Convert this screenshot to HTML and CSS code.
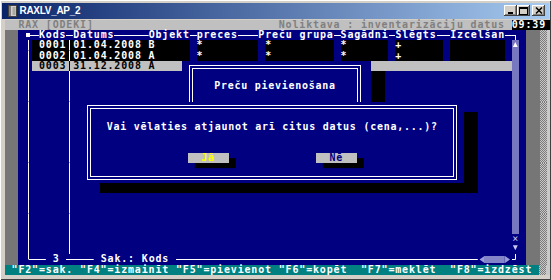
FILE: index.html
```html
<!DOCTYPE html>
<html lang="lv">
<head>
    <meta charset="UTF-8">
    <title>RAXLV_AP_2</title>
    <link rel="stylesheet" href="styles.css">
</head>
<body>

<div class="window">
    <div class="titlebar">
        <svg class="app-icon" viewBox="0 0 9 12"><rect x="0.5" y="0.5" width="8" height="11" fill="#d4d0c8" stroke="#404040"/><rect x="1" y="1" width="2" height="10" fill="#808080"/><path d="M4.5 3h3M4.5 5h3M4.5 7h3M4.5 9h3" stroke="#808080"/></svg>
        <span class="title">RAXLV_AP_2</span>
        <div class="caption-buttons">
            <span class="cap-btn"><svg width="8" height="7" viewBox="0 0 8 7"><rect x="1" y="5" width="5" height="2" fill="#000"/></svg></span>
            <span class="cap-btn"><svg width="9" height="8" viewBox="0 0 9 8"><rect x="0.5" y="0.5" width="8" height="7" fill="none" stroke="#000"/><rect x="0" y="0" width="9" height="2" fill="#000"/></svg></span>
            <span class="cap-btn close"><svg width="8" height="7" viewBox="0 0 8 7"><path d="M1 0.5L7 6.5M7 0.5L1 6.5" stroke="#000" stroke-width="1.5"/></svg></span>
        </div>
    </div>

    <div class="screen">
        <!-- row 0: program header -->
        <div class="row"><span class="hd">  RAX [ODEKI]                           </span><span class="hd">Noliktava : inventarizāciju datus </span><span class="clock fill">09:39</span></div>

        <!-- row 1: table header -->
        <div class="row"><span class="dk">  </span><span class="bl"> </span><span class="bl mark"> </span><span class="bl hl"> </span><span class="bl">Kods</span><span class="bl hl"> </span><span class="bl">Datums</span><span class="bl hl">     </span><span class="bl">Objekt</span><span class="bl hl"> </span><span class="bl">preces</span><span class="bl hl">   </span><span class="bl">Preču grupa</span><span class="bl hl"> </span><span class="bl">Sagādni</span><span class="bl hl"> </span><span class="bl">Slēgts</span><span class="bl hl">  </span><span class="bl">Izcelšan</span><span class="bl hl"> </span><span class="bl c-tr"> </span><span class="bl fill"></span><span class="tail"></span></div>

        <!-- rows 2-4: records -->
        <div class="row"><span class="dk">  </span><span class="bl"> </span><span class="bl vl"> </span><span class="bk"> 0001</span><span class="bk vl"> </span><span class="bk">01.04.2008 B     </span><span class="bl"> </span><span class="bk">*        </span><span class="bl"> </span><span class="bk">*         </span><span class="bl"> </span><span class="bk">*      </span><span class="bl"> </span><span class="bk">+      </span><span class="bl"> </span><span class="bk">        </span><span class="bl"> </span><span class="sb cell up"></span><span class="bl fill"></span><span class="tail"></span></div>
        <div class="row"><span class="dk">  </span><span class="bl"> </span><span class="bl vl"> </span><span class="bk"> 0002</span><span class="bk vl"> </span><span class="bk">01.04.2008 A     </span><span class="bl"> </span><span class="bk">*        </span><span class="bl"> </span><span class="bk">*         </span><span class="bl"> </span><span class="bk">*      </span><span class="bl"> </span><span class="bk">+      </span><span class="bl"> </span><span class="bk">        </span><span class="bl"> </span><span class="sb cell"></span><span class="bl fill"></span><span class="tail"></span></div>
        <div class="row"><span class="dk">  </span><span class="bl"> </span><span class="bl vl"> </span><span class="sel"> 0003</span><span class="sel vl"> </span><span class="sel fill">31.12.2008 A</span><span class="sb cell"></span><span class="bl"> </span><span class="tail"></span></div>

        <!-- rows 5-22: empty table body -->
        <div class="row"><span class="dk">  </span><span class="bl"> </span><span class="bl vl"> </span><span class="bl">     </span><span class="bl vl"> </span><span class="bl fill"></span><span class="sb cell"></span><span class="bl"> </span><span class="tail"></span></div>
        <div class="row"><span class="dk">  </span><span class="bl"> </span><span class="bl vl"> </span><span class="bl">     </span><span class="bl vl"> </span><span class="bl fill"></span><span class="sb cell"></span><span class="bl"> </span><span class="tail"></span></div>
        <div class="row"><span class="dk">  </span><span class="bl"> </span><span class="bl vl"> </span><span class="bl">     </span><span class="bl vl"> </span><span class="bl fill"></span><span class="sb cell"></span><span class="bl"> </span><span class="tail"></span></div>
        <div class="row"><span class="dk">  </span><span class="bl"> </span><span class="bl vl"> </span><span class="bl">     </span><span class="bl vl"> </span><span class="bl fill"></span><span class="sb cell"></span><span class="bl"> </span><span class="tail"></span></div>
        <div class="row"><span class="dk">  </span><span class="bl"> </span><span class="bl vl"> </span><span class="bl">     </span><span class="bl vl"> </span><span class="bl fill"></span><span class="sb cell"></span><span class="bl"> </span><span class="tail"></span></div>
        <div class="row"><span class="dk">  </span><span class="bl"> </span><span class="bl vl"> </span><span class="bl">     </span><span class="bl vl"> </span><span class="bl fill"></span><span class="sb cell"></span><span class="bl"> </span><span class="tail"></span></div>
        <div class="row"><span class="dk">  </span><span class="bl"> </span><span class="bl vl"> </span><span class="bl">     </span><span class="bl vl"> </span><span class="bl fill"></span><span class="sb cell"></span><span class="bl"> </span><span class="tail"></span></div>
        <div class="row"><span class="dk">  </span><span class="bl"> </span><span class="bl vl"> </span><span class="bl">     </span><span class="bl vl"> </span><span class="bl fill"></span><span class="sb cell"></span><span class="bl"> </span><span class="tail"></span></div>
        <div class="row"><span class="dk">  </span><span class="bl"> </span><span class="bl vl"> </span><span class="bl">     </span><span class="bl vl"> </span><span class="bl fill"></span><span class="sb cell"></span><span class="bl"> </span><span class="tail"></span></div>
        <div class="row"><span class="dk">  </span><span class="bl"> </span><span class="bl vl"> </span><span class="bl">     </span><span class="bl vl"> </span><span class="bl fill"></span><span class="sb cell"></span><span class="bl"> </span><span class="tail"></span></div>
        <div class="row"><span class="dk">  </span><span class="bl"> </span><span class="bl vl"> </span><span class="bl">     </span><span class="bl vl"> </span><span class="bl fill"></span><span class="sb cell"></span><span class="bl"> </span><span class="tail"></span></div>
        <div class="row"><span class="dk">  </span><span class="bl"> </span><span class="bl vl"> </span><span class="bl">     </span><span class="bl vl"> </span><span class="bl fill"></span><span class="sb cell"></span><span class="bl"> </span><span class="tail"></span></div>
        <div class="row"><span class="dk">  </span><span class="bl"> </span><span class="bl vl"> </span><span class="bl">     </span><span class="bl vl"> </span><span class="bl fill"></span><span class="sb cell"></span><span class="bl"> </span><span class="tail"></span></div>
        <div class="row"><span class="dk">  </span><span class="bl"> </span><span class="bl vl"> </span><span class="bl">     </span><span class="bl vl"> </span><span class="bl fill"></span><span class="sb cell"></span><span class="bl"> </span><span class="tail"></span></div>
        <div class="row"><span class="dk">  </span><span class="bl"> </span><span class="bl vl"> </span><span class="bl">     </span><span class="bl vl"> </span><span class="bl fill"></span><span class="sb cell"></span><span class="bl"> </span><span class="tail"></span></div>
        <div class="row"><span class="dk">  </span><span class="bl"> </span><span class="bl vl"> </span><span class="bl">     </span><span class="bl vl"> </span><span class="bl fill"></span><span class="sb cell"></span><span class="bl"> </span><span class="tail"></span></div>
        <div class="row"><span class="dk">  </span><span class="bl"> </span><span class="bl vl"> </span><span class="bl">     </span><span class="bl vl"> </span><span class="bl fill"></span><span class="bl cell cross">×</span><span class="bl"> </span><span class="tail"></span></div>
        <div class="row"><span class="dk">  </span><span class="bl"> </span><span class="bl vl"> </span><span class="bl">     </span><span class="bl vl"> </span><span class="bl fill"></span><span class="bl cell down"></span><span class="bl"> </span><span class="tail"></span></div>

        <!-- row 23: table footer -->
        <div class="row"><span class="dk">  </span><span class="bl"> </span><span class="bl c-bl"> </span><span class="bl hl">  </span><span class="bl"> 3 </span><span class="bl hl">    </span><span class="bl"> Sak.: Kods </span><span class="bl hl fill"></span><span class="bl cell arr-l"></span><span class="bl thumb">   </span><span class="bl cell arr-r"></span><span class="bl c-br"> </span><span class="bl"> </span><span class="tail"></span></div>

        <!-- row 24: key hints -->
        <div class="row"><span class="st fill"> "F2"=sak. "F4"=izmainīt "F5"=pievienot "F6"=kopēt  "F7"=meklēt  "F8"=izdzēst</span><span class="tail-short"></span></div>

        <!-- dialogs over the table -->
        <div class="shadow shadow-title"></div>
        <div class="dialog dialog-title">
            <div class="frame">
                <div class="caption">Preču pievienošana</div>
            </div>
        </div>

        <div class="shadow shadow-confirm"></div>
        <div class="dialog dialog-confirm">
            <div class="frame">
                <div class="question">Vai vēlaties atjaunot arī citus datus (cena,...)?</div>
                <div class="buttons">
                    <span class="btn btn-yes">Jā</span>
                    <span class="btn btn-no">Nē</span>
                </div>
            </div>
        </div>
    </div>
</div>

</body>
</html>
```

FILE: styles.css
```css
* { box-sizing: border-box; }

body { margin: 0; background: #d4d0c8; }

.window { width: 551px; height: 280px; overflow: hidden; padding: 2.5px 2px 0 2px; background: #d4d0c8; box-shadow: inset 1px 1px #fff, inset -1px -1px #404040; }

/* title bar */
.titlebar { display: flex; align-items: center; height: 16px; padding: 0 4px 0 6px; background: linear-gradient(to right, #0a246a, #a6caf0); }
.app-icon { flex: none; width: 9px; height: 12px; margin-right: 2.5px; }
.title { color: #fff; font: bold 10px "Liberation Sans", Arial, sans-serif; letter-spacing: -0.3px; white-space: nowrap; }
.caption-buttons { display: flex; margin-left: auto; }
.cap-btn { display: flex; align-items: center; justify-content: center; width: 13px; height: 11px; background: #d4d0c8; box-shadow: inset -1px -1px #404040, inset 1px 1px #fff, inset -2px -2px #808080; }
.cap-btn.close { margin-left: 2px; }

/* console screen, 80 x 25 cells (last column cut by the window edge) */
.screen { --cw: 6.85px; position: relative; width: 545.3px; margin: 1.5px 0 0 2.7px; color: #fff; font: bold 9.97px/10.2px "DejaVu Sans Mono", monospace; letter-spacing: 0.85px; }
.row { display: flex; height: 10.2px; }
.row > span { flex: none; white-space: pre; }
.row > .fill { flex: 1 1 0; }
.cell { width: var(--cw); }

.hd { background-color: #c0c0c0; color: #808080; }
.clock { background-color: #000; }
.dk { background-color: #767676; }
.bl { background-color: #000080; }
.bk { background-color: #000; }
.sel { background-color: #c0c0c0; color: #000; }
.st { background-color: #008080; }
.sb { background-color: #7878c0; }

.tail { width: 24.4px; background: linear-gradient(to right, #767676 13.7px, transparent 13.7px 20.55px, #c8c8c8 20.55px), repeating-conic-gradient(#c8c8c8 0 25%, #7a7a7a 0 50%) 0 0 / 2px 2px; }
.tail-short { width: 10.55px; background: linear-gradient(to right, transparent 6.85px, #c8c8c8 6.85px), repeating-conic-gradient(#c8c8c8 0 25%, #7a7a7a 0 50%) 0 0 / 2px 2px; }

/* frame lines */
.vl { background-image: linear-gradient(#fff, #fff); background-size: 1px 100%; background-position: center; background-repeat: no-repeat; }
.sel.vl { background-image: linear-gradient(#000, #000); }
.hl { background-image: linear-gradient(#fff, #fff); background-size: 100% 1px; background-position: center; background-repeat: no-repeat; }
.mark { background-image: linear-gradient(#fff, #fff), linear-gradient(#fff, #fff); background-size: 4px 4px, 50% 1px; background-position: 0.5px center, right center; background-repeat: no-repeat; }
.c-tr { background-image: linear-gradient(#fff, #fff), linear-gradient(#fff, #fff); background-size: 50% 1px, 1px 50%; background-position: left center, center bottom; background-repeat: no-repeat; }
.c-bl { background-image: linear-gradient(#fff, #fff), linear-gradient(#fff, #fff); background-size: 50% 1px, 1px 50%; background-position: right center, center top; background-repeat: no-repeat; }
.c-br { background-image: linear-gradient(#fff, #fff), linear-gradient(#fff, #fff); background-size: 50% 1px, 1px 50%; background-position: left center, center top; background-repeat: no-repeat; }

/* scroll bars */
.up::before, .down::before, .arr-l::before, .arr-r::before { content: ""; display: block; }
.up::before { width: 5px; height: 5px; margin: 1.5px auto 0; background: #fff; clip-path: polygon(50% 0, 100% 100%, 0 100%); }
.down::before { width: 5px; height: 5px; margin: 1px auto 0; background: #c8c8f0; clip-path: polygon(0 0, 100% 0, 50% 100%); }
.cross { color: #c8c8f0; font-weight: normal; text-align: center; letter-spacing: 0; }
.arr-l::before { width: 5px; height: 7px; margin: 1.6px 0 0 auto; background: #9c9cdc; clip-path: polygon(100% 0, 100% 100%, 0 50%); }
.arr-r::before { width: 5px; height: 7px; margin: 1.6px auto 0 0; background: #9c9cdc; clip-path: polygon(0 0, 100% 50%, 0 100%); }
.thumb { background-image: linear-gradient(#8484c8, #8484c8); background-size: 100% 7px; background-position: center; background-repeat: no-repeat; }

/* dialogs */
.shadow { position: absolute; background: #000; }
.shadow-title { left: 366.3px; top: 51px; width: 13.7px; height: 35px; }
.shadow-confirm { left: 95.3px; top: 92px; width: 378px; height: 81.3px; }

.dialog { position: absolute; overflow: hidden; background: #000080; letter-spacing: 0.75px; }
.dialog-title { left: 177.5px; top: 40.8px; width: 188.8px; height: 48px; }
.dialog-confirm { left: 75.3px; top: 81.6px; width: 384.5px; height: 81.6px; }

.frame { border: 4px double #fff; text-align: center; }
.dialog-title .frame { height: 60px; margin: 4.2px 10px 0 6.8px; }
.dialog-confirm .frame { height: 74.5px; margin: 3.9px 7px 0 7px; }
.caption { margin-top: 12.2px; }
.question { margin-top: 12.5px; }

.buttons { display: flex; justify-content: center; gap: 87.2px; margin-top: 20.4px; }
.btn { width: 41.1px; height: 10.2px; background: #c0c0c0; box-shadow: 6.85px 5.1px 0 #000; }
.btn-yes { color: #ff0; }
.btn-no { color: #000080; }
```
